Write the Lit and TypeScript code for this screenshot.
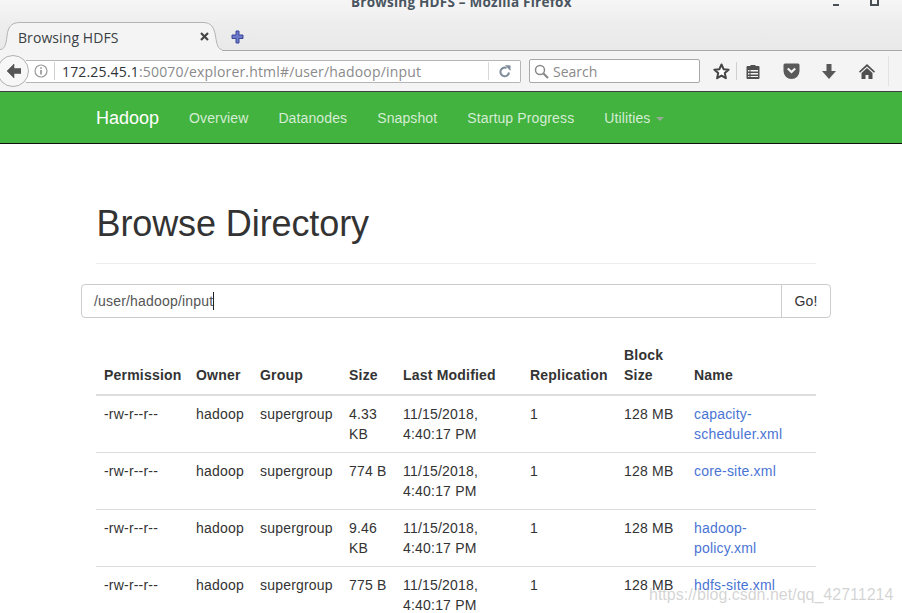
import { LitElement, html, css } from "lit";
import { customElement } from "lit/decorators.js";

const rows = [
  ["4.33 KB", "capacity-scheduler.xml"],
  ["774 B", "core-site.xml"],
  ["9.46 KB", "hadoop-policy.xml"],
  ["775 B", "hdfs-site.xml"],
];

@customElement("app-root")
export class AppRoot extends LitElement {
  static styles = css`
    :host { display: block; width: 902px; height: 613px; overflow: hidden; position: relative; background: #fff; font-family: "Liberation Sans", Arial, sans-serif; color: #333; font-size: 14px; }
    svg { display: block; flex: none; }
    .titlebar { height: 50px; background: linear-gradient(#f6f6f6, #ededed 50%, #e9e9e9); border-bottom: 1px solid #a9a9a9; position: relative; box-sizing: content-box; }
    .title { height: 10px; position: relative; overflow: hidden; }
    .title-text { position: absolute; left: 351px; top: -6px; font: 700 13.5px/16px "Open Sans", sans-serif; letter-spacing: 0.23px; color: #4a5560; white-space: nowrap; }
    .win-min { position: absolute; left: 833px; top: 4px; width: 6px; height: 2px; background: #4a4f55; }
    .win-max { position: absolute; left: 870px; top: -4px; width: 5px; height: 6px; border: 2px solid #4a4f55; }
    .tabs { display: flex; align-items: flex-end; height: 40px; }
    .tab { position: relative; width: 222px; height: 29px; margin-bottom: -1px; flex: none; }
    .tab-shape { position: absolute; left: 0; top: 0; }
    .tab-label { position: absolute; left: 18px; top: 7px; font: 14px/18px "Open Sans", sans-serif; letter-spacing: 0.08px; color: #3a3f44; white-space: nowrap; }
    .tab-x { position: absolute; left: 200px; top: 10px; }
    .plus { margin: 0 0 6px 9px; }
    .toolbar { height: 40px; background: #f4f4f4; border-bottom: 1px solid #3f3f3f; display: flex; align-items: center; position: relative; }
    .back { width: 32px; height: 32px; box-sizing: border-box; margin-left: -3px; padding-left: 2px; border-radius: 50%; background: #f7f7f7; border: 1px solid #b0b0b0; display: flex; align-items: center; justify-content: center; position: relative; z-index: 1; flex: none; }
    .url { margin-left: -3px; width: 495px; height: 23px; box-sizing: border-box; background: #fff; border: 1px solid #b5b5b5; border-left: none; border-radius: 0 2px 2px 0; display: flex; align-items: center; padding-left: 8px; flex: none; }
    .url-sep { width: 1px; height: 18px; background: #d0d0d0; margin: 0 7px 0 6px; flex: none; }
    .url-text { font: 14px/20px "Open Sans", sans-serif; color: #8a8a8a; white-space: nowrap; flex: 1; letter-spacing: 0.17px; position: relative; top: 1px; }
    .url-text b { font-weight: 400; color: #2e3436; }
    .reload { margin: 0 9px 0 0; }
    .url-sep2 { width: 1px; height: 18px; background: #d8d8d8; margin-right: 10px; flex: none; }
    .search { margin-left: 8px; width: 171px; height: 24px; box-sizing: border-box; background: #fff; border: 1px solid #a8a8a8; border-radius: 2px; display: flex; align-items: center; padding-left: 4px; gap: 4px; flex: none; }
    .search span { font: 14px/20px "Open Sans", sans-serif; color: #8a8a8a; position: relative; top: 1px; }
    .tools { display: flex; align-items: center; margin-left: 13px; height: 30px; }
    .tsep { width: 1px; height: 18px; background: #d0d0d0; margin: 0 9px 0 6px; }
    .nav { box-sizing: content-box; height: 50px; background: #43b33f; border-bottom: 1px solid #111; display: flex; align-items: center; padding: 1px 0 0 96px; }
    .brand { font-size: 18px; color: #fff; margin-right: 30px; }
    .navlink { font-size: 14px; letter-spacing: 0.12px; color: rgba(255,255,255,.78); margin-right: 30px; white-space: nowrap; display: flex; align-items: center; }
    .caret { display: inline-block; border-top: 4px solid #9aa89a; border-left: 4px solid transparent; border-right: 4px solid transparent; margin-left: 6px; margin-top: 2px; }
    .main { padding: 60px 71px 0 81px; }
    h1 { margin: 0 15px 0 15px; padding-bottom: 19px; font-size: 36px; line-height: 40px; font-weight: 500; color: #333; border-bottom: 1px solid #eee; letter-spacing: -0.1px; text-indent: 0.5px; }
    .group { display: flex; margin-top: 20px; height: 34px; box-sizing: border-box; border: 1px solid #ccc; border-radius: 4px; }
    .field { flex: 1; padding-left: 12px; font-size: 14px; line-height: 32px; color: #555; letter-spacing: 0.18px; display: flex; align-items: center; }
    .cursor { width: 1px; height: 18px; background: #222; }
    .go { width: 48px; border-left: 1px solid #ccc; text-align: center; font-size: 14px; line-height: 32px; letter-spacing: 0.1px; color: #333; }
    table { margin: 19px 15px 0; width: 720px; border-collapse: collapse; table-layout: fixed; font-size: 14px; letter-spacing: 0.2px; }
    th { text-align: left; vertical-align: bottom; padding: 8px 8px 9px; line-height: 20px; border-bottom: 2px solid #ddd; font-weight: 700; color: #333; }
    td { padding: 8px; line-height: 20px; vertical-align: top; border-bottom: 1px solid #ddd; color: #333; }
    .c1 { width: 92px; } .c2 { width: 64px; } .c3 { width: 89px; } .c4 { width: 54px; }
    .c5 { width: 127px; } .c6 { width: 94px; } .c7 { width: 70px; }
    a { color: #4a74d4; text-decoration: none; }
    .mark { position: absolute; left: 649px; top: 586px; font-size: 16px; line-height: 18px; color: rgba(170,170,170,.5); white-space: nowrap; }
    .gap-24 { margin-right: 23px; } .gap-22 { margin-right: 22px; }
    .tend { width: 1px; height: 30px; background: #e2e2e2; margin-left: 13px; }
  `;

  render() {
    return html`
      <div class="titlebar">
        <div class="title">
          <span class="title-text">Browsing HDFS – Mozilla Firefox</span>
          <span class="win-min"></span><span class="win-max"></span>
        </div>
        <div class="tabs">
          <div class="tab">
            <svg class="tab-shape" width="222" height="29" viewBox="0 0 222 29"><path d="M0 27.5C4 27.500 6 24 7 14 8 5 11 1 19 .5H204C211 1 214 5 215.500 14 217 23 218 27.500 222 27.500V29H0Z" fill="#f4f4f4"/><path d="M0 27.500C4 27.500 6 24 7 14 8 5 11 1 19 .5H204C211 1 214 5 215.500 14 217 23 218 27.500 222 27.500" fill="none" stroke="#b4b4b4"/></svg>
            <span class="tab-label">Browsing HDFS</span>
            <svg class="tab-x" width="9" height="9" viewBox="0 0 9 9"><path d="M1 1l7 7M8 1L1 8" stroke="#444" stroke-width="2.200"/></svg>
          </div>
          <svg class="plus" width="13" height="14" viewBox="0 0 13 14"><path d="M5 1h3v4h4v3.500H8V13H5V8.500H1V5h4Z" fill="#6c78c8" stroke="#3b4799"/></svg>
        </div>
      </div>
      <div class="toolbar">
        <div class="back"><svg width="14" height="14" viewBox="0 0 14 14"><path d="M7 0L0 7l7 7V9.500h7v-5H7Z" fill="#555" stroke="#555" stroke-linejoin="round" stroke-width=".6"/></svg></div>
        <div class="url">
          <svg width="14" height="14" viewBox="0 0 14 14"><circle cx="7" cy="7" r="6" fill="none" stroke="#9a9a9a" stroke-width="1.200"/><path d="M7 3.200v1.600M7 6v4.500" stroke="#8a8a8a" stroke-width="1.500"/></svg>
          <span class="url-sep"></span>
          <span class="url-text"><b>172.25.45.1</b>:50070/explorer.html#/user/hadoop/input</span>
          <span class="url-sep2"></span>
          <svg class="reload" width="12" height="13" viewBox="0 0 12 13"><path d="M10 7.500A4.300 4.300 0 1 1 7.500 3" fill="none" stroke="#7d8a99" stroke-width="2"/><path d="M6 0l5.500 .5V6Z" fill="#7d8a99"/></svg>
        </div>
        <div class="search">
          <svg width="15" height="15" viewBox="0 0 15 15"><circle cx="6" cy="6" r="4.500" fill="none" stroke="#8a8a8a" stroke-width="1.500"/><path d="M9.500 9.500L14 14" stroke="#8a8a8a" stroke-width="2.200"/></svg>
          <span>Search</span>
        </div>
        <div class="tools">
          <svg width="17" height="17" viewBox="0 0 17 17"><path d="M8.500 1.500l2.100 4.700 5 .5-3.800 3.400 1.100 5.100-4.400-2.600-4.400 2.600 1.100-5.100L1.400 6.700l5-.5Z" fill="#fff" stroke="#444" stroke-width="2" stroke-linejoin="round"/></svg>
          <span class="tsep"></span>
          <svg class="gap-24" width="14" height="15" viewBox="0 0 14 15"><path d="M4.500 2V1h5v1h3a1 1 0 0 1 1 1v11a1 1 0 0 1-1 1h-11a1 1 0 0 1-1-1V3a1 1 0 0 1 1-1Z" fill="#4f4f4f"/><path d="M2 6h10v1.500H2zM2 9h10v1.500H2zM2 12h10v1H2z" fill="#f4f4f4"/><path d="M4 5v9" stroke="#4f4f4f"/></svg>
          <svg class="gap-22" width="17" height="16" viewBox="0 0 17 16"><path d="M2 .5h13a1.500 1.500 0 0 1 1.500 1.500v6a8 8 0 0 1-16 0V2A1.500 1.500 0 0 1 2 .5Z" fill="#5a5a5a"/><path d="M4.800 5.500l3.700 3.500 3.700-3.500" fill="none" stroke="#f4f4f4" stroke-width="2.200"/></svg>
          <svg class="gap-24" width="14" height="15" viewBox="0 0 14 15"><path d="M4.500 0h5v7H14l-7 8-7-8h4.500Z" fill="#585858"/></svg>
          <svg width="16" height="15" viewBox="0 0 16 15"><path d="M8 0L0 7.500l1 1.200L8 2.500l7 6.200 1-1.200Z" fill="#4f4f4f"/><path d="M8 4L2.500 9v6H6.500v-4h3v4h4V9Z" fill="#4f4f4f"/></svg>
          <span class="tend"></span>
        </div>
      </div>
      <div class="nav">
        <span class="brand">Hadoop</span>
        <span class="navlink">Overview</span>
        <span class="navlink">Datanodes</span>
        <span class="navlink">Snapshot</span>
        <span class="navlink">Startup Progress</span>
        <span class="navlink">Utilities <i class="caret"></i></span>
      </div>
      <div class="main">
        <h1>Browse Directory</h1>
        <div class="group">
          <div class="field">/user/hadoop/input<span class="cursor"></span></div>
          <div class="go">Go!</div>
        </div>
        <table>
          <colgroup><col class="c1"/><col class="c2"/><col class="c3"/><col class="c4"/><col class="c5"/><col class="c6"/><col class="c7"/><col/></colgroup>
          <thead><tr><th>Permission</th><th>Owner</th><th>Group</th><th>Size</th><th>Last Modified</th><th>Replication</th><th>Block Size</th><th>Name</th></tr></thead>
          <tbody>
            ${rows.map(r => html`<tr><td>-rw-r--r--</td><td>hadoop</td><td>supergroup</td><td>${r[0]}</td><td>11/15/2018, 4:40:17 PM</td><td>1</td><td>128 MB</td><td><a>${r[1]}</a></td></tr>`)}
          </tbody>
        </table>
      </div>
      <div class="mark">https://blog.csdn.net/qq_42711214</div>
    `;
  }
}
